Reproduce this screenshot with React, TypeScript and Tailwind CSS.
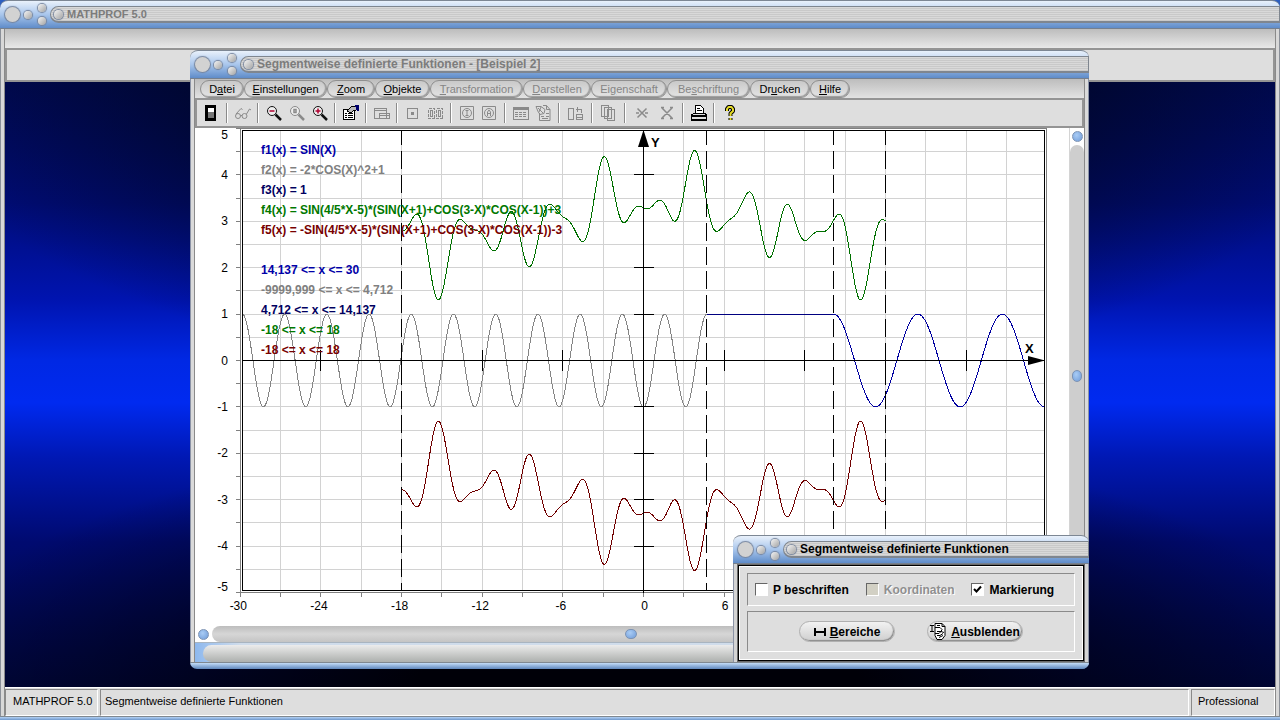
import type { ReactNode } from 'react';
import clsx from 'clsx';

const CHART_W = 874;
const CHART_H = 498;

// chart geometry: origin and pixels per unit
const ORIGIN_X = 448.5;
const ORIGIN_Y = 232.5;
const UNIT_X = 13.44;
const UNIT_Y = 46.4;

const PLOT = { left: 47.5, top: 2.5, right: 849.5, bottom: 462.5 };

const toX = (x: number) => ORIGIN_X + x * UNIT_X;
const toY = (y: number) => ORIGIN_Y - y * UNIT_Y;
const snap = (v: number) => Math.floor(v) + 0.5;

const f1 = (x: number) => Math.sin(x);
const f2 = (x: number) => -2 * Math.cos(x) ** 2 + 1;
const f4 = (x: number) =>
  Math.sin(0.8 * x - 5) * (Math.sin(x + 1) + Math.cos(3 - x) * Math.cos(x - 1)) + 3;
const f5 = (x: number) => -f4(x);

function plot(fn: (x: number) => number, from: number, to: number) {
  const points: string[] = [];
  const steps = Math.round((to - from) / 0.07);
  for (let i = 0; i <= steps; i++) {
    const x = from + ((to - from) * i) / steps;
    points.push(`${toX(x).toFixed(2)},${toY(fn(x)).toFixed(2)}`);
  }
  return points.join(' ');
}

const range = (from: number, to: number, step: number) => {
  const out: number[] = [];
  for (let v = from; v <= to + 0.001; v += step) out.push(v);
  return out;
};

const curves = [
  { points: plot(f2, -29.8, 4.712), color: '#858585' },
  { points: plot(() => 1, 4.712, 14.137), color: '#000080' },
  { points: plot(f1, 14.137, 29.8), color: '#0000a0' },
  { points: plot(f4, -18, 18), color: '#007000' },
  { points: plot(f5, -18, 18), color: '#700000' },
];

const legend = [
  { text: 'f1(x) = SIN(X)', color: '#0000a8', y: 26 },
  { text: 'f2(x) = -2*COS(X)^2+1', color: '#808080', y: 46 },
  { text: 'f3(x) = 1', color: '#000060', y: 66 },
  { text: 'f4(x) = SIN(4/5*X-5)*(SIN(X+1)+COS(3-X)*COS(X-1))+3', color: '#007800', y: 86 },
  { text: 'f5(x) = -SIN(4/5*X-5)*(SIN(X+1)+COS(3-X)*COS(X-1))-3', color: '#780000', y: 106 },
  { text: '14,137 <= x <= 30', color: '#0000a8', y: 146 },
  { text: '-9999,999 <= x <= 4,712', color: '#808080', y: 166 },
  { text: '4,712 <= x <= 14,137', color: '#000060', y: 186 },
  { text: '-18 <= x <= 18', color: '#007800', y: 206 },
  { text: '-18 <= x <= 18', color: '#780000', y: 226 },
];

function Chart() {
  return (
    <svg
      viewBox={`0 0 ${CHART_W} ${CHART_H}`}
      preserveAspectRatio="xMinYMin meet"
      className="block min-h-0 min-w-0 flex-1 bg-white"
      role="img"
      aria-label="Funktionsgraph"
    >
      <g shapeRendering="crispEdges" fill="none">
        <g stroke="#d2d2d2">
          {range(-27, 27, 3).map((x) => (
            <path key={x} d={`M${snap(toX(x))} ${PLOT.top}V${PLOT.bottom}`} />
          ))}
          {range(-4.5, 4.5, 0.5).map((y) => (
            <path key={y} d={`M${PLOT.left} ${snap(toY(y))}H${PLOT.right}`} />
          ))}
        </g>

        <g stroke="#808080">
          {range(-30, 30, 3).map((x) => (
            <path key={x} d={`M${snap(toX(x))} 465V469`} />
          ))}
          {range(-5, 5, 0.5).map((y) => (
            <path key={y} d={`M41 ${snap(toY(y))}H46`} />
          ))}
          <rect x="45.5" y="0.5" width="806" height="464" />
        </g>
        <rect
          x={PLOT.left}
          y={PLOT.top}
          width={PLOT.right - PLOT.left}
          height={PLOT.bottom - PLOT.top}
          stroke="#000"
        />

        {curves.map((c) => (
          <polyline key={c.points.slice(0, 14) + c.color} points={c.points} stroke={c.color} />
        ))}

        <g stroke="#000">
          <path d={`M${PLOT.left} 232.5H${PLOT.right}M448.5 3V465`} />
          {range(-24, 24, 6)
            .filter((x) => x !== 0)
            .map((x) => (
              <path key={x} d={`M${snap(toX(x))} 222V243`} />
            ))}
          {[-4, -3, -2, -1, 1, 2, 4].map((y) => (
            <path key={y} d={`M439 ${snap(toY(y))}H459`} />
          ))}
          {[-18, 4.712, 14.137, 18].map((x) => (
            <path
              key={x}
              d={`M${snap(toX(x))} 3V462`}
              strokeDasharray="18 6"
              strokeDashoffset="4"
            />
          ))}
        </g>
      </g>
      <path d="M448.5 2L454 19H443Z" />
      <path d="M850 232.5L833 228V237Z" />

      <g fontFamily="'Liberation Sans', sans-serif" fontWeight="700" fontSize="13">
        <text x="456" y="19">Y</text>
        <text x="830" y="225">X</text>
      </g>
      <g fontFamily="'Liberation Sans', sans-serif" fontWeight="700" fontSize="12">
        {legend.map((l) => (
          <text key={l.y} x="66" y={l.y} fill={l.color}>
            {l.text}
          </text>
        ))}
      </g>
      <g fontFamily="'Liberation Sans', sans-serif" fontSize="12">
        {range(-4, 4, 1).map((y) => (
          <text key={y} x="33" y={toY(y) + 4} textAnchor="end">
            {y}
          </text>
        ))}
        <text x="33" y="11" textAnchor="end">5</text>
        <text x="33" y="463" textAnchor="end">-5</text>
        {range(-30, 30, 6).map((x) => (
          <text key={x} x={toX(x) + (x < 0 ? -2 : 1)} y="482" textAnchor="middle">
            {x}
          </text>
        ))}
      </g>
    </svg>
  );
}

function Knob({ className, label }: { className: string; label: string }) {
  return (
    <button
      type="button"
      aria-label={label}
      className={clsx(
        'block shrink-0 rounded-full bg-linear-to-br from-[#f4f4f4] to-[#a4a4a4] shadow-[0_0_1px_1px_#76849c]',
        className,
      )}
    />
  );
}

interface TitleBarProps {
  title: string;
  active?: boolean;
  small?: boolean;
}

function TitleBar({ title, active, small }: TitleBarProps) {
  return (
    <header className="flex h-[29px] shrink-0 items-center rounded-t-lg border-t border-b border-[#7d8794] border-b-[#76808e] bg-linear-to-b from-[#e9f1fb] via-[#a9c6ec] to-[#5f8cc9] pl-[5px]">
      <Knob label="Schließen" className="size-[15px] bg-[#d2d2d2] bg-none" />
      <Knob label="Minimieren" className="ml-1 size-2" />
      <div className="ml-1.5 flex flex-col gap-[5px]">
        <Knob label="Maximieren" className="size-2" />
        <Knob label="Einrollen" className="size-2" />
      </div>
      <div className="ml-1 flex h-[17px] min-w-0 flex-1 items-center gap-1 rounded-l-full border border-[#7f868f] border-b-2 bg-[repeating-linear-gradient(180deg,#d9d9d9_0_1px,#c9c9c9_1px_2px)] pl-[3px]">
        <Knob label="Systemmenü" className="size-[9px]" />
        <h2
          className={clsx(
            'truncate font-bold',
            small ? 'text-[11px]' : 'text-xs',
            active ? 'text-black' : 'text-[#7c7c7c]',
          )}
        >
          {title}
        </h2>
      </div>
    </header>
  );
}

const menu = [
  { pre: 'D', key: 'a', post: 'tei', width: 'w-[44px]' },
  { pre: '', key: 'E', post: 'instellungen', width: 'w-[83px]' },
  { pre: '', key: 'Z', post: 'oom', width: 'w-[48px]' },
  { pre: '', key: 'O', post: 'bjekte', width: 'w-[55px]' },
  { pre: '', key: 'T', post: 'ransformation', width: 'w-[93px]', disabled: true },
  { pre: '', key: 'D', post: 'arstellen', width: 'w-[68px]', disabled: true },
  { pre: 'Ei', key: 'g', post: 'enschaft', width: 'w-[76px]', disabled: true },
  { pre: 'Be', key: 's', post: 'chriftung', width: 'w-[83px]', disabled: true },
  { pre: 'Dr', key: 'u', post: 'cken', width: 'w-[60px]' },
  { pre: '', key: 'H', post: 'ilfe', width: 'w-[40px]' },
];

function MenuBar() {
  return (
    <nav className="flex h-[21px] shrink-0 border-b-2 border-[#949494] bg-linear-to-b from-[#bdbdbd] to-[#e2e2e2] pt-px pl-[5px]">
      {menu.map((m) => (
        <button
          key={m.pre + m.key + m.post}
          type="button"
          disabled={m.disabled}
          className={clsx(
            'h-[18px] shrink-0 rounded-full border border-[#8f8f8f] bg-linear-to-b from-[#c9c9c9] to-[#e4e4e4] text-[11px] leading-4 whitespace-nowrap shadow-[inset_-1px_-1px_1px_#9a9a9a]',
            m.width,
            m.disabled ? 'text-[#858585]' : 'text-black',
          )}
        >
          {m.pre}
          <span className="underline">{m.key}</span>
          {m.post}
        </button>
      ))}
    </nav>
  );
}

const GRAY = '#8a8a8a';

function Magnifier({ sign, color }: { sign: string; color: string }) {
  return (
    <g fill="none">
      <circle cx="6" cy="6" r="4.5" stroke={color} fill="#eee" />
      <path d="M9.500 9.500L15 15" stroke={color} strokeWidth="2.500" />
      <path d={sign} stroke={color === GRAY ? GRAY : '#b00030'} strokeWidth="1.500" />
    </g>
  );
}

const icons: Record<string, ReactNode> = {
  Fenster: (
    <g shapeRendering="crispEdges">
      <path d="M1 0h11v16H1z" fill="#000" />
      <path d="M4 3h6v4H4z" fill="#fff" />
      <path d="M4 7h6v6H4z" fill="#777" />
    </g>
  ),
  Ansicht: (
    <g fill="none" stroke={GRAY}>
      <circle cx="3" cy="11" r="2.500" />
      <circle cx="9.500" cy="11" r="2.500" />
      <path d="M5.500 10.500h1.500M1 9L6 3.500l1.500 1M11.500 9l3-5 1.500 1" />
    </g>
  ),
  'Zoom verkleinern': <Magnifier sign="M3.500 6h5" color="#111" />,
  'Zoom Standard': <Magnifier sign="M5 4.500h2v3H5z" color={GRAY} />,
  'Zoom vergrößern': <Magnifier sign="M3.500 6h5M6 3.500v5" color="#111" />,
  Eigenschaften: (
    <g shapeRendering="crispEdges">
      <path d="M.5 4.500h11v10H.5z" fill="#fff" stroke="#000" />
      <path d="M2 8.500h2M5 8.500h5M2 10.500h2M5 10.500h5M2 12.500h2M5 12.500h5" stroke="#000" />
      <path d="M4 6l4-4 2-1h3v4l-3 1-2 2z" fill="#bbb" stroke="#000" />
      <path d="M12 0h4v6h-2z" fill="#00006c" />
    </g>
  ),
  Anordnen: (
    <g fill="none" stroke={GRAY} shapeRendering="crispEdges">
      <path d="M.5 3.500h12v10H.5zM0 5.500h12M5.500 8.500h10v5h-10zM6 10.500h9" />
    </g>
  ),
  Punkt: (
    <g fill="none" stroke={GRAY} shapeRendering="crispEdges">
      <path d="M2.500 3.500h10v10h-10z" />
      <path d="M6 7h3v3H6z" fill={GRAY} stroke="none" />
    </g>
  ),
  Bereich: (
    <g fill="none" stroke={GRAY} shapeRendering="crispEdges">
      <path d="M.5 3.500h6v10h-6zM8.500 3.500h6v10h-6z" strokeDasharray="3 1" />
      <path d="M2.500 5.500h2v6h-2zM10.500 5.500h2v6h-2z" />
    </g>
  ),
  'Kreis 1': (
    <g fill="none" stroke={GRAY}>
      <path d="M1.500 1.500h13v13h-13z" />
      <circle cx="8" cy="8" r="4.500" />
      <path d="M8 5v6M6.500 5.500h3M6.500 10.500h3" />
    </g>
  ),
  'Kreis 2': (
    <g fill="none" stroke={GRAY}>
      <path d="M.5 1.500h13v13H.5z" />
      <circle cx="7" cy="8" r="4.500" />
      <path d="M5.500 11V7L7 5l1.500 2v4M5.500 8.500h3" />
    </g>
  ),
  Tabelle: (
    <g fill="none" stroke={GRAY} shapeRendering="crispEdges">
      <path d="M.5 2.500h15v12H.5z" />
      <path d="M1 4h14" strokeWidth="2" />
      <path d="M2 7.500h12M2 9.500h12M2 11.500h12" strokeDasharray="3 1" />
    </g>
  ),
  Bericht: (
    <g fill="none" stroke={GRAY}>
      <path d="M3.500 8v7.500h10.500V4.500L10.500.5H7M10.500.5v4H14" />
      <path d="M0 1.500h5l4 3-1 4-4 1-2-3zM2 3l5 5M5 2l-2 5M5 11.500h3M10 8.500h3M10 11.500h3M6 13.500h6" />
    </g>
  ),
  Verschieben: (
    <g fill="none" stroke={GRAY} shapeRendering="crispEdges">
      <path d="M.5 3.500h5v11h-5zM8.500 9.500h6v5h-6zM8 12.500h7M13.500 8V4.500H8M9.500 2v5" />
    </g>
  ),
  Kopieren: (
    <g fill="#dedede" stroke={GRAY} shapeRendering="crispEdges">
      <path d="M.5.500h7v11h-7zM3.500 2.500h7v11h-7zM6.500 4.500h7v11h-7z" />
    </g>
  ),
  'Punkt löschen': (
    <path d="M3.500 3.500l9 9M12.500 3.500l-9 9M2 8h3M11 8h3" stroke={GRAY} strokeWidth="1.500" />
  ),
  'Alle löschen': (
    <path
      d="M3 3l10 10M13 3L3 13M2 2.500h3M11 2.500h3M2 13.500h3M11 13.500h3"
      stroke={GRAY}
      strokeWidth="1.500"
      fill="none"
    />
  ),
  Drucken: (
    <g shapeRendering="crispEdges">
      <path d="M4.500 8.500V.5h5l3 3v5z" fill="#fff" stroke="#000" />
      <path d="M6 3.500h3M6 5.500h5" stroke="#000" />
      <path d="M.5 9.500l3-1h10l2 1v5H.5z" fill="#ddd" stroke="#000" />
      <path d="M1 11h14M0 14.500h16" stroke="#000" strokeWidth="2" />
    </g>
  ),
  Hilfe: (
    <g fill="none" strokeLinejoin="round">
      <path d="M5 6V4l1.500-2h3L11 4v2L8.500 8.500V11M8.500 13v2" stroke="#000" strokeWidth="4" />
      <path d="M5 6V4l1.500-2h3L11 4v2L8.500 8.500V11M8.500 13v2" stroke="#e6dc28" strokeWidth="2" />
    </g>
  ),
};

const toolGroups = [
  { items: ['Fenster'] },
  { items: ['Ansicht'] },
  { items: ['Zoom verkleinern', 'Zoom Standard', 'Zoom vergrößern'] },
  { items: ['Eigenschaften'] },
  { items: ['Anordnen'] },
  { items: ['Punkt', 'Bereich'] },
  { items: ['Kreis 1', 'Kreis 2'] },
  { items: ['Tabelle', 'Bericht'] },
  { items: ['Verschieben'], wide: true },
  { items: ['Kopieren'], wide: true },
  { items: ['Punkt löschen', 'Alle löschen'], wide: true },
  { items: ['Drucken'] },
  { items: ['Hilfe'] },
];

function Toolbar() {
  return (
    <div
      role="toolbar"
      className="flex h-7 shrink-0 items-center border-x-2 border-b-2 border-[#949494] bg-[#dedede] pl-[3px]"
    >
      {toolGroups.map((group, i) => (
        <div key={group.items[0]} className="flex items-center">
          {i > 0 && <div className="mx-[3px] h-5 w-0.5 border-l border-[#8a8a8a] bg-white" />}
          {group.items.map((name) => (
            <button
              key={name}
              type="button"
              aria-label={name}
              className={clsx('flex justify-center', group.wide ? 'w-[25px]' : 'w-[23px]')}
            >
              <svg viewBox="0 0 16 16" className="size-4 overflow-visible">
                {icons[name]}
              </svg>
            </button>
          ))}
        </div>
      ))}
    </div>
  );
}

const ballClass =
  'rounded-full border border-[#7c93b4] bg-radial-[at_40%_35%] from-[#a9ccf5] to-[#6f9bd8]';

function FunctionWindow() {
  return (
    <section className="absolute top-[50px] right-[191px] bottom-[51px] left-[190px] flex flex-col">
      <TitleBar title="Segmentweise definierte Funktionen - [Beispiel 2]" />
      <div className="flex min-h-0 flex-1 flex-col border-x border-[#8b93a6] bg-[#dadada] px-[3px]">
        <div className="flex min-h-0 flex-1 flex-col border-x border-[#8a8a8a]">
          <MenuBar />
          <Toolbar />
          <div className="flex min-h-0 flex-1">
            <Chart />
            <div className="flex w-[15px] shrink-0 flex-col items-center border-l border-[#d4d4d4] bg-white">
              <div className={clsx('my-[3px] size-[11px] shrink-0', ballClass)} />
              <div className="flex w-full flex-1 flex-col items-center justify-center rounded-t-full bg-[#cecece]">
                <div className={clsx('mb-5 h-3 w-2.5', ballClass)} />
              </div>
            </div>
          </div>
          <div className="flex h-4 shrink-0 items-center bg-white">
            <div className={clsx('mx-[3px] size-[11px] shrink-0', ballClass)} />
            <div className="flex h-full flex-1 items-center justify-center rounded-l-full bg-linear-to-b from-[#bdbdbd] via-[#d6d6d6] to-[#c4c4c4]">
              <div className={clsx('mr-[34px] h-2.5 w-3', ballClass)} />
            </div>
          </div>
          <div className="flex h-5 shrink-0 border-t border-[#a8b4c0] bg-linear-to-r from-[#8db8ee] to-[#cfdceb] to-5% pt-0.5 pl-2">
            <div className="flex-1 rounded-l-full bg-linear-to-b from-[#ececec] to-[#adb0ae]" />
          </div>
        </div>
      </div>
      <div className="h-[7px] shrink-0 rounded-b-lg border-t border-[#808890] bg-linear-to-b from-[#c4dcf7] to-[#5f87bc]" />
    </section>
  );
}

interface CheckProps {
  label: string;
  checked?: boolean;
  disabled?: boolean;
}

function Check({ label, checked, disabled }: CheckProps) {
  return (
    <label
      className={clsx(
        'flex items-center gap-[5px] text-xs font-bold whitespace-nowrap',
        disabled && 'text-[#8f8f8f] [text-shadow:1px_1px_0_#fff]',
      )}
    >
      <span className="grid">
        <input
          type="checkbox"
          defaultChecked={checked}
          disabled={disabled}
          className="peer col-start-1 row-start-1 size-[13px] appearance-none border border-t-[#666] border-r-white border-b-white border-l-[#666] bg-white disabled:bg-[#d2d0c4]"
        />
        <svg
          viewBox="0 0 13 13"
          className="pointer-events-none invisible col-start-1 row-start-1 size-[13px] peer-checked:visible"
        >
          <path d="M3 6l2.500 2.500L10 3.500" fill="none" stroke="#000" strokeWidth="2" />
        </svg>
      </span>
      {label}
    </label>
  );
}

const dialogButton =
  'flex h-[21px] w-24 items-center justify-center gap-1 rounded-full border border-[#b0b0b0] bg-linear-to-b from-[#f2f2f2] to-[#cfcfcf] text-xs font-bold shadow-[inset_-1px_-1px_1px_#8a8a8a]';
const etched = 'border border-t-[#8a8a8a] border-r-white border-b-white border-l-[#8a8a8a]';

function OptionsDialog() {
  return (
    <section
      role="dialog"
      aria-label="Segmentweise definierte Funktionen"
      className="absolute right-[191px] bottom-[51px] flex h-[134px] w-[356px] flex-col"
    >
      <TitleBar title="Segmentweise definierte Funktionen" active />
      <div className="flex flex-1 flex-col border-x border-[#8b93a6] bg-[#d4d4d4] px-[3px]">
        <div className="flex flex-1 flex-col border border-[#6a6a6a]">
          <div className="flex flex-1 flex-col gap-[5px] border border-black bg-[#dedede] px-2 pt-[7px] pb-2 shadow-[inset_0_0_0_1px_#fff]">
            <div className={clsx('flex h-[33px] items-center gap-[17px] px-[7px]', etched)}>
              <Check label="P beschriften" />
              <Check label="Koordinaten" disabled />
              <Check label="Markierung" checked />
            </div>
            <div className={clsx('flex flex-1 items-center justify-center gap-8', etched)}>
              <button type="button" className={dialogButton}>
                <svg viewBox="0 0 12 10" className="h-2.5 w-3">
                  <path d="M1 1v8M11 1v8M1 5h10" stroke="#000" strokeWidth="2" />
                </svg>
                <span>
                  <span className="underline">B</span>ereiche
                </span>
              </button>
              <button type="button" className={dialogButton}>
                <svg viewBox="0 0 17 17" className="size-[17px] shrink-0">
                  <path d="M5 .5h7l3 3v9l-3 4H7l-2-4z" fill="#fff" stroke="#000" />
                  <path
                    d="M0 2.500h4M2 2.500v6M0 8.500h4M5 4.500h5l2 2-1 2H7M12 .5v3h3M7 2.500h3M5 10.500h4l2-2 3 1M7 12.500h3l3-2M9 14.500l4-2"
                    fill="none"
                    stroke="#000"
                  />
                </svg>
                <span>
                  <span className="underline">A</span>usblenden
                </span>
              </button>
            </div>
          </div>
        </div>
      </div>
      <div className="h-[7px] shrink-0 rounded-b-lg border-t border-[#808890] bg-linear-to-b from-[#c4dcf7] to-[#5f87bc]" />
    </section>
  );
}

export default function App() {
  return (
    <div className="relative flex h-screen flex-col overflow-hidden bg-[#2d5fc0] font-['Liberation_Sans',Arial,sans-serif] text-black">
      <TitleBar title="MATHPROF 5.0" small />
      <div className="flex min-h-0 flex-1 flex-col border-x border-[#8a8f98] bg-[#d8d8d8] px-[3px]">
        <div className="flex min-h-0 flex-1 flex-col border-x border-[#8a8a8a]">
          <div className="h-[21px] shrink-0 border-b-2 border-[#949494] bg-linear-to-b from-[#bdbdbd] to-[#e8e8e8]" />
          <div className="h-8 shrink-0 border-x-2 border-b-2 border-[#949494] bg-[#dedede]" />
          <main className="flex-1 bg-[radial-gradient(ellipse_58%_50%_at_50%_0%,rgba(0,4,16,0.95)_30%,transparent_100%),radial-gradient(ellipse_58%_42%_at_50%_100%,rgba(0,0,8,1)_30%,transparent_100%),linear-gradient(180deg,#000a58_0%,#000c78_20%,#0014b0_36%,#0028e4_46%,#002af0_53%,#0018b4_62%,#000a70_76%,#00063c_100%)]" />
          <footer className="flex h-[29px] shrink-0 gap-0.5 border-t border-white bg-[#dedede] pt-px text-[11px] leading-[23px]">
            <div className={clsx('w-[93px] pl-[7px]', etched)}>MATHPROF 5.0</div>
            <div className={clsx('flex-1 pl-1', etched)}>Segmentweise definierte Funktionen</div>
            <div className={clsx('w-[84px] pl-1.5', etched)}>Professional</div>
          </footer>
        </div>
      </div>
      <div className="h-1 shrink-0 border-t border-[#808890] bg-linear-to-b from-[#b4d2f5] to-[#6f98cc]" />
      <FunctionWindow />
      <OptionsDialog />
    </div>
  );
}
